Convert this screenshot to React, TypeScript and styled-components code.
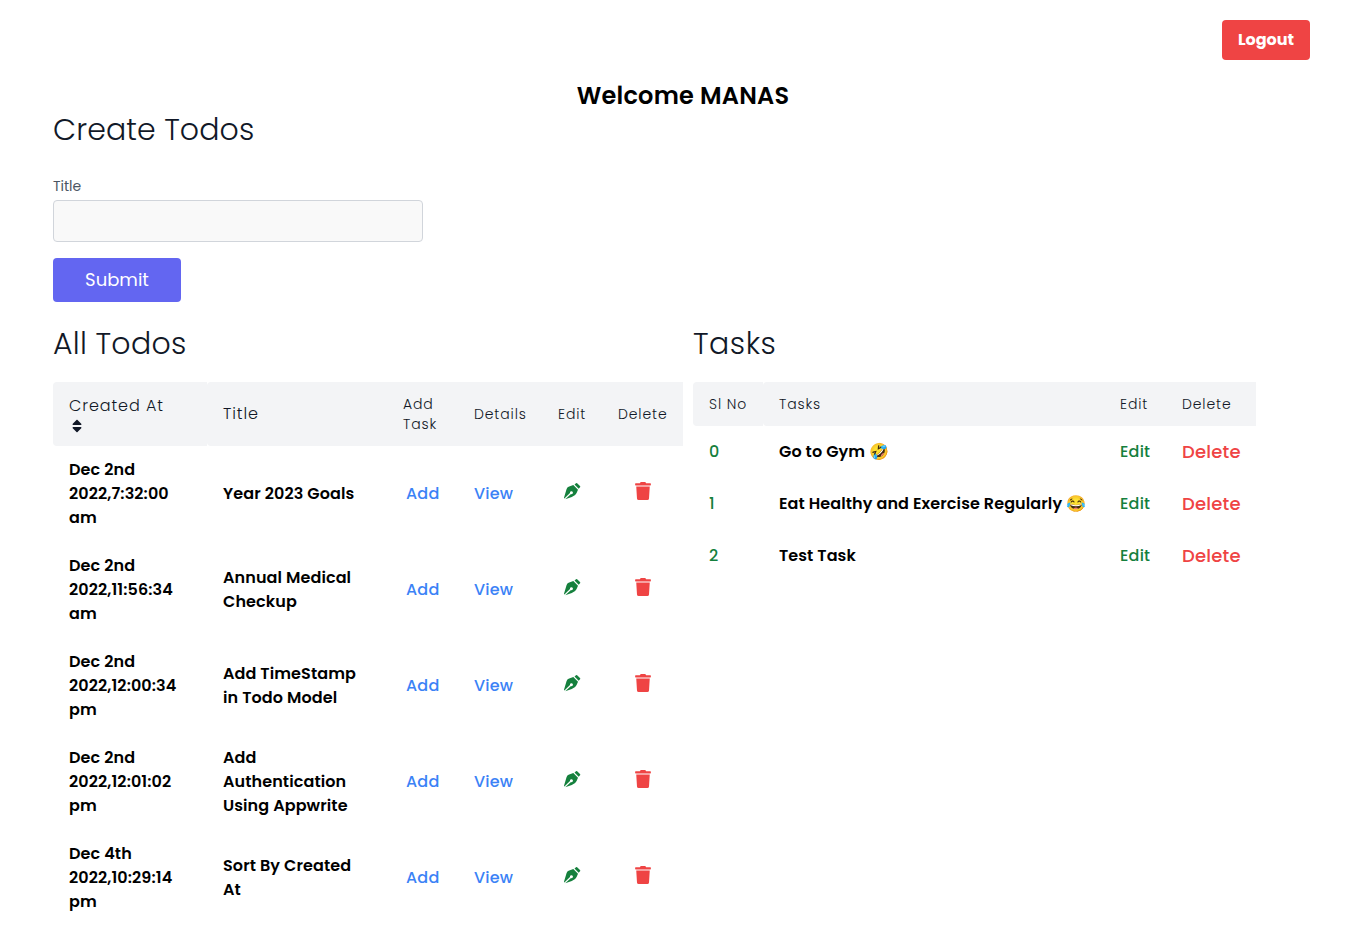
import React from 'react';
import styled, { createGlobalStyle } from 'styled-components';
import { FaSort, FaTrash } from 'react-icons/fa';

const Global = createGlobalStyle`
  *, *::before, *::after { box-sizing: border-box; }
  body { margin: 0; background: #fff; color: #000; font-family: Poppins, Inter, sans-serif; font-size: 16px; line-height: 24px; }
  table { border-collapse: collapse; border-spacing: 0; table-layout: fixed; }
  button { font-family: inherit; border: 0; cursor: pointer; }
`;

const Page = styled.div`
  height: 930px;
  overflow: hidden;
`;

const TopBar = styled.header`
  display: flex;
  justify-content: flex-end;
  padding: 20px 56px 0 0;
`;

const LogoutButton = styled.button`
  width: 88px;
  height: 40px;
  padding: 0 0 2px;
  border-radius: 4px;
  background: #ef4444;
  color: #fff;
  font-size: 16px;
  font-weight: 700;
`;

const Welcome = styled.h1`
  margin: 20px 0 0;
  text-align: center;
  font-size: 24px;
  line-height: 32px;
  font-weight: 600;
  letter-spacing: 0.22px;
`;

const Content = styled.main`
  padding: 0 53px;
`;

const Heading = styled.h2<{ $ls?: number }>`
  margin: 0;
  color: #111827;
  font-size: 30px;
  line-height: 36px;
  font-weight: 300;
  letter-spacing: ${(p) => p.$ls ?? 0}px;
`;

const Form = styled.form`
  display: flex;
  flex-direction: column;
  align-items: flex-start;
  padding-top: 24px;
`;

const Label = styled.label`
  display: flex;
  flex-direction: column;
  color: #4b5563;
  font-size: 14px;
  line-height: 28px;
`;

const Input = styled.input`
  width: 370px;
  height: 42px;
  border: 1px solid #d1d5db;
  border-radius: 4px;
  background: #f9f9f9;
  padding: 4px 12px;
  font: inherit;
`;

const SubmitButton = styled.button`
  margin-top: 16px;
  width: 128px;
  height: 44px;
  padding: 0 0 2px;
  border-radius: 4px;
  background: #6366f1;
  color: #fff;
  font-size: 18px;
`;

const Panels = styled.div`
  display: flex;
  gap: 10px;
  align-items: flex-start;
  padding-top: 24px;
`;

const Panel = styled.section<{ $width: number }>`
  flex: none;
  width: ${(p) => p.$width}px;
`;

const Table = styled.table`
  width: 100%;
  margin-top: 20px;
`;

const Th = styled.th<{ $large?: boolean; $rounded?: boolean; $height: number }>`
  height: ${(p) => p.$height}px;
  padding: 0 0 0 16px;
  background: #f3f4f6;
  border-radius: ${(p) => (p.$rounded ? '4px 0 0 4px' : '0')};
  color: #111827;
  text-align: left;
  font-weight: 300;
  font-size: ${(p) => (p.$large ? 16 : 14)}px;
  line-height: 20px;
  letter-spacing: ${(p) => (p.$large ? 0.9 : 0.88)}px;
  svg { display: block; margin: 2px 0 -2px; }
`;

const Td = styled.td<{ $height: number; $indent?: number }>`
  height: ${(p) => p.$height}px;
  padding: 0 0 0 ${(p) => p.$indent ?? 16}px;
  font-weight: 600;
  white-space: nowrap;
  letter-spacing: 0.1px;
  svg { display: block; margin-bottom: 6px; }
`;

const Action = styled.span<{ $color: string; $large?: boolean }>`
  color: ${(p) => p.$color};
  font-size: ${(p) => (p.$large ? 18 : 16)}px;
  font-weight: 500;
  letter-spacing: 0.2px;
`;

const BLUE = '#3b82f6';
const GREEN = '#15803d';
const RED = '#ef4444';

const PenIcon = () => (
  <svg width="17" height="17" viewBox="0 0 17 17" fill={GREEN}>
    <path d="M10.5 1.5 12 .3Q12.8-.2 13.4.4L16 3Q16.5 3.6 16 4.3L14.7 5.8Z" />
    <path d="M9.3 2 4.6 3.8Q3.2 4.3 2.6 6L0 14.8Q0 15.4.4 15.6L6 10.1A1.5 1.5 0 1 1 7 11.1L1.2 16.3 7.8 14Q11.6 12.6 12.6 10L14 6.7Z" />
  </svg>
);

const todos = [
  { date: ['Dec 2nd', '2022,7:32:00', 'am'], title: ['Year 2023 Goals'] },
  { date: ['Dec 2nd', '2022,11:56:34', 'am'], title: ['Annual Medical', 'Checkup'] },
  { date: ['Dec 2nd', '2022,12:00:34', 'pm'], title: ['Add TimeStamp', 'in Todo Model'] },
  { date: ['Dec 2nd', '2022,12:01:02', 'pm'], title: ['Add', 'Authentication', 'Using Appwrite'] },
  { date: ['Dec 4th', '2022,10:29:14', 'pm'], title: ['Sort By Created', 'At'] },
];

const tasks = ['Go to Gym 🤣', 'Eat Healthy and Exercise Regularly 😂', 'Test Task'];

const Lines = ({ lines }: { lines: string[] }) => (
  <>
    {lines.map((l) => (
      <div key={l}>{l}</div>
    ))}
  </>
);

const Columns = ({ widths }: { widths: number[] }) => (
  <colgroup>
    {widths.map((w, i) => (
      <col key={i} width={w} />
    ))}
  </colgroup>
);

export default function App() {
  return (
    <Page>
      <Global />
      <TopBar>
        <LogoutButton>Logout</LogoutButton>
      </TopBar>
      <Welcome>Welcome MANAS</Welcome>
      <Content>
        <Heading $ls={0.1}>Create Todos</Heading>
        <Form>
          <Label>
            Title
            <Input />
          </Label>
          <SubmitButton type="button">Submit</SubmitButton>
        </Form>
        <Panels>
          <Panel $width={630}>
            <Heading $ls={0.25}>All Todos</Heading>
            <Table>
              <Columns widths={[154, 180, 71, 84, 60, 81]} />
              <thead>
                <tr>
                  <Th $height={64} $large $rounded>
                    Created At
                    <FaSort size={16} />
                  </Th>
                  <Th $height={64} $large $rounded>Title</Th>
                  <Th $height={64}>
                    <Lines lines={['Add', 'Task']} />
                  </Th>
                  <Th $height={64}>Details</Th>
                  <Th $height={64}>Edit</Th>
                  <Th $height={64}>Delete</Th>
                </tr>
              </thead>
              <tbody>
                {todos.map((t) => (
                  <tr key={t.date[1]}>
                    <Td $height={96}><Lines lines={t.date} /></Td>
                    <Td $height={96}><Lines lines={t.title} /></Td>
                    <Td $height={96} $indent={19}><Action $color={BLUE}>Add</Action></Td>
                    <Td $height={96}><Action $color={BLUE}>View</Action></Td>
                    <Td $height={96} $indent={22}><PenIcon /></Td>
                    <Td $height={96} $indent={32}><FaTrash size={18} color={RED} /></Td>
                  </tr>
                ))}
              </tbody>
            </Table>
          </Panel>
          <Panel $width={563}>
            <Heading $ls={0.5}>Tasks</Heading>
            <Table>
              <Columns widths={[70, 341, 62, 90]} />
              <thead>
                <tr>
                  <Th $height={44} $rounded>Sl No</Th>
                  <Th $height={44} $rounded>Tasks</Th>
                  <Th $height={44}>Edit</Th>
                  <Th $height={44}>Delete</Th>
                </tr>
              </thead>
              <tbody>
                {tasks.map((t, i) => (
                  <tr key={t}>
                    <Td $height={52}><Action $color={GREEN}>{i}</Action></Td>
                    <Td $height={52}>{t}</Td>
                    <Td $height={52}><Action $color={GREEN}>Edit</Action></Td>
                    <Td $height={52}><Action $color={RED} $large>Delete</Action></Td>
                  </tr>
                ))}
              </tbody>
            </Table>
          </Panel>
        </Panels>
      </Content>
    </Page>
  );
}
